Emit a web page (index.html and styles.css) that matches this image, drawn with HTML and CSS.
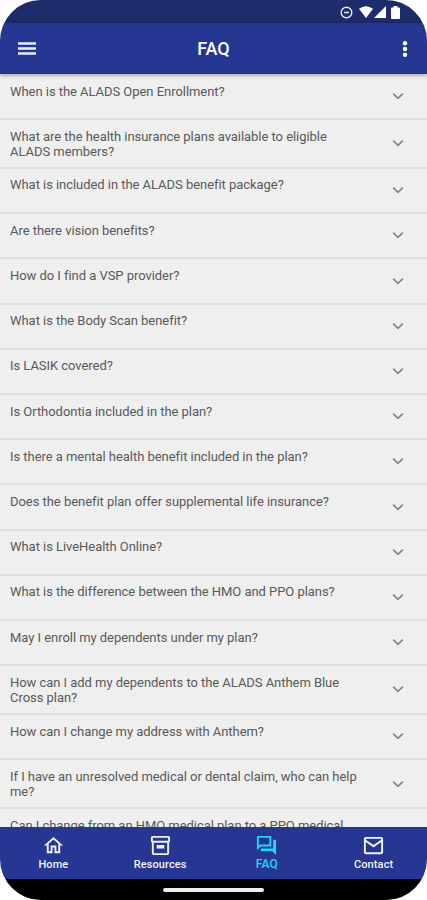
FILE: index.html
```html
<!DOCTYPE html>
<html lang="en">
<head>
<meta charset="utf-8">
<title>FAQ</title>
<link rel="stylesheet" href="styles.css">
</head>
<body>
<div class="phone">
  <div class="status">
    <svg width="13" height="13" viewBox="0 0 13 13"><circle cx="6.5" cy="6.5" r="5.3" fill="none" stroke="#e8eafa" stroke-width="1.4"/><path d="M4 6.5h5" stroke="#e8eafa" stroke-width="1.5"/></svg>
    <svg class="wifi" width="14" height="12" viewBox="0 0 14 12"><path d="M0 2.8Q7-2.4 14 2.8L7 12z" fill="#fff"/></svg>
    <svg class="signal" width="12" height="12" viewBox="0 0 12 12"><path d="M12 0v12H0z" fill="#fff"/></svg>
    <svg class="battery" width="9" height="13" viewBox="0 0 9 13"><path d="M2.5 0h4v1.4H8q1 0 1 1V12q0 1-1 1H1q-1 0-1-1V2.4q0-1 1-1h1.5z" fill="#fff"/></svg>
  </div>
  <header class="appbar">
    <svg width="18" height="13" viewBox="0 0 18 13"><path d="M0 1.5h18M0 6.5h18M0 11.5h18" stroke="#eceefa" stroke-width="2.4"/></svg>
    <h1>FAQ</h1>
    <svg width="6" height="16" viewBox="0 0 6 16" fill="#fff"><circle cx="3" cy="2.3" r="2.2"/><circle cx="3" cy="8" r="2.2"/><circle cx="3" cy="13.7" r="2.2"/></svg>
  </header>
  <main class="list" id="list"></main>
  <nav class="tabs">
    <a class="tab"><svg viewBox="0 0 24 24"><path d="M12 5.69l5 4.5V18h-2v-6H9v6H7v-7.81l5-4.5M12 3L2 12h3v8h6v-6h2v6h6v-8h3L12 3z"/></svg><span>Home</span></a>
    <a class="tab"><svg viewBox="0 0 24 24"><path d="M20 2H4c-1 0-2 .9-2 2v3.01c0 .72.43 1.34 1 1.69V20c0 1.1 1.1 2 2 2h14c.9 0 2-.9 2-2V8.700c.57-.35 1-.97 1-1.690V4c0-1.100-1-2-2-2zm-1 18H5V9h14v11zm1-13H4V4h16v3zM8 11.500h8v3.500H8z"/></svg><span>Resources</span></a>
    <a class="tab active"><svg viewBox="0 0 24 24"><path d="M15 4v7H5.170L4 12.170V4h11m1-2H3c-.55 0-1 .45-1 1v14l4-4h10c.55 0 1-.45 1-1V3c0-.55-.45-1-1-1zm5 4h-2v9H6v2c0 .55.45 1 1 1h11l4 4V7c0-.55-.45-1-1-1z"/></svg><span>FAQ</span></a>
    <a class="tab"><svg viewBox="0 0 24 24"><path d="M22 5c0-1.100-.9-2-2-2H4c-1.100 0-2 .9-2 2v14c0 1.100.9 2 2 2h16c1.100 0 2-.9 2-2V5zm-2 0v1l-8 5.500L4 6V5h16zm0 14H4V8.300l8 5.700 8-5.700V19z"/></svg><span>Contact</span></a>
  </nav>
  <div class="gesture"><div class="pill"></div></div>
</div>
<script src="app.js"></script>
</body>
</html>
```
FILE: styles.css
```css
* { box-sizing: border-box; }
body { margin: 0; background: #fff; font-family: Roboto, sans-serif; }
.phone {
  width: 427px; height: 900px; border-radius: 41px; overflow: hidden;
  display: flex; flex-direction: column; background: #efefef;
}
.status {
  flex: 0 0 22.5px; background: #1e2c6b; display: flex; align-items: center;
  justify-content: flex-end; padding: 2px 27px 0 0;
}
.wifi { margin-left: 6px; }
.signal { margin-left: 1px; }
.battery { margin-left: 5px; }
.appbar {
  flex: 0 0 51.5px; background: #263693; display: flex; align-items: center;
  justify-content: space-between; padding: 1px 19px 0 18px;
  box-shadow: 0 1px 4px rgba(0,0,0,.4); position: relative;
}
.appbar h1 { margin: 0 0 0 -11px; color: #fff; font-size: 18px; font-weight: 500; line-height: 22px; }
.list { flex: 1 1 0; min-height: 0; overflow: hidden; }
.row {
  min-height: 45.22px; border-bottom: 2px solid #e0e0e0; padding: 8.6px 23px 8.3px 10px;
  display: flex; justify-content: space-between; color: #595959;
  font-size: 13px; line-height: 15px; letter-spacing: -.045px;
}
.row:first-child { min-height: 46px; padding-top: 9.5px; }
.row p { margin: 0; width: 352px; }
.row svg { width: 12px; height: 8px; align-self: center; flex: none; margin-top: -1px; }
.tabs { flex: 0 0 52px; background: #263693; display: flex; }
.tab {
  flex: 1; display: flex; flex-direction: column; align-items: center;
  color: #f0f1fb; font-size: 11px; font-weight: 500; line-height: 13px; padding-top: 7px; letter-spacing: .1px;
}
.tab svg { width: 23px; height: 23px; fill: currentColor; margin-bottom: 1px; }
.active { color: #20d8ee; font-size: 12px; }
.gesture { flex: 0 0 21.5px; background: #000; display: flex; justify-content: center; padding-top: 9px; }
.pill { width: 101px; height: 4px; border-radius: 2px; background: #eee; }
```
FILE: app.js
```js
const questions = [
  'When is the ALADS Open Enrollment?',
  'What are the health insurance plans available to eligible<br>ALADS members?',
  'What is included in the ALADS benefit package?',
  'Are there vision benefits?',
  'How do I find a VSP provider?',
  'What is the Body Scan benefit?',
  'Is LASIK covered?',
  'Is Orthodontia included in the plan?',
  'Is there a mental health benefit included in the plan?',
  'Does the benefit plan offer supplemental life insurance?',
  'What is LiveHealth Online?',
  'What is the difference between the HMO and PPO plans?',
  'May I enroll my dependents under my plan?',
  'How can I add my dependents to the ALADS Anthem Blue<br>Cross plan?',
  'How can I change my address with Anthem?',
  'If I have an unresolved medical or dental claim, who can help<br>me?',
  'Can I change from an HMO medical plan to a PPO medical'
];
document.getElementById('list').innerHTML = questions.map(q =>
  `<div class="row"><p>${q}</p><svg viewBox="0 0 12 8"><path d="M1.2 1.7l4.800 4.700 4.800-4.700" fill="none" stroke="#858585" stroke-width="1.7"/></svg></div>`
).join('');
```
